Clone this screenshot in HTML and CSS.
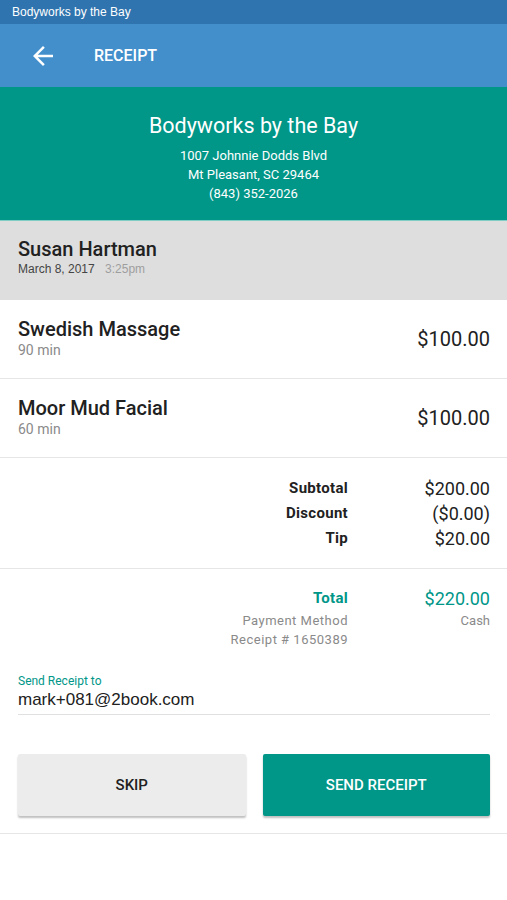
FILE: index.html
```html
<!DOCTYPE html>
<html lang="en">
<head>
    <meta charset="UTF-8">
    <meta name="viewport" content="width=device-width, initial-scale=1.0">
    <title>Receipt</title>
    <link rel="stylesheet" href="styles.css">
</head>
<body>
    <div class="status-bar">Bodyworks by the Bay</div>

    <header class="toolbar">
        <svg class="back-icon" width="30" height="30" viewBox="0 0 24 24">
            <path d="M20 11H7.83l5.59-5.59L12 4l-8 8 8 8 1.41-1.41L7.83 13H20v-2z" fill="#fff"/>
        </svg>
        <span class="toolbar-title">RECEIPT</span>
    </header>

    <section class="business">
        <div class="business-name">Bodyworks by the Bay</div>
        <div class="business-line">1007 Johnnie Dodds Blvd</div>
        <div class="business-line">Mt Pleasant, SC 29464</div>
        <div class="business-line">(843) 352-2026</div>
    </section>

    <section class="customer">
        <div class="customer-name">Susan Hartman</div>
        <div class="customer-date">March 8, 2017 <span class="customer-time">3:25pm</span></div>
    </section>

    <div class="item">
        <div class="item-info">
            <div class="item-name">Swedish Massage</div>
            <div class="item-length">90 min</div>
        </div>
        <div class="item-price">$100.00</div>
    </div>
    <div class="item">
        <div class="item-info">
            <div class="item-name">Moor Mud Facial</div>
            <div class="item-length">60 min</div>
        </div>
        <div class="item-price">$100.00</div>
    </div>

    <section class="summary">
        <div class="sum-row"><span class="sum-label">Subtotal</span><span class="sum-value">$200.00</span></div>
        <div class="sum-row"><span class="sum-label">Discount</span><span class="sum-value">($0.00)</span></div>
        <div class="sum-row"><span class="sum-label">Tip</span><span class="sum-value">$20.00</span></div>
    </section>

    <section class="totals">
        <div class="sum-row total"><span class="sum-label">Total</span><span class="sum-value">$220.00</span></div>
        <div class="sum-row meta"><span class="sum-label">Payment Method</span><span class="sum-value">Cash</span></div>
        <div class="sum-row meta"><span class="sum-label">Receipt # 1650389</span><span class="sum-value"></span></div>
    </section>

    <section class="send">
        <label class="send-label" for="email">Send Receipt to</label>
        <input id="email" class="send-input" type="text" value="mark+081@2book.com">
    </section>

    <div class="actions">
        <button class="btn btn-skip">SKIP</button>
        <button class="btn btn-send">SEND RECEIPT</button>
    </div>
</body>
</html>
```

FILE: styles.css
```css
body {
    margin: 0;
    font-family: Roboto, "Liberation Sans", sans-serif;
    color: #212121;
    background: #fff;
}

.status-bar {
    height: 24px;
    background: #2f74ae;
    color: #fff;
    font-family: "Liberation Sans", Arial, sans-serif;
    font-size: 12px;
    line-height: 25px;
    padding-left: 12px;
}

.toolbar {
    height: 63px;
    background: #428fcc;
    display: flex;
    align-items: center;
    color: #fff;
}
.back-icon { margin-left: 28px; }
.toolbar-title {
    margin-left: 36px;
    font-size: 16px;
    font-weight: 500;
}

.business {
    background: #009688;
    color: #fff;
    text-align: center;
    padding: 27px 0 17px;
    border-bottom: 1px solid #7fcdc4;
}
.business-name {
    font-size: 21.5px;
    line-height: 24px;
    margin-bottom: 8px;
}
.business-line {
    font-size: 13px;
    line-height: 19px;
}

.customer {
    background: #dedede;
    height: 79px;
    padding: 16px 18px 0;
    box-sizing: border-box;
}
.customer-name {
    font-size: 20px;
    font-weight: 500;
    line-height: 24px;
}
.customer-date {
    font-family: "Liberation Sans", Arial, sans-serif;
    font-size: 12px;
    color: #444;
    margin-top: 1px;
}
.customer-time {
    color: #9e9e9e;
    margin-left: 7px;
}

.item {
    display: flex;
    align-items: center;
    justify-content: space-between;
    height: 78px;
    padding: 0 17px 0 18px;
    border-bottom: 1px solid #e6e6e6;
}
.item-info { margin-top: -2px; }
.item-name {
    font-size: 20px;
    font-weight: 500;
    line-height: 24px;
}
.item-length {
    font-size: 14px;
    color: #8a8a8a;
    line-height: 18px;
}
.item-price { font-size: 20px; }

.summary {
    padding: 18px 17px 17px 0;
    border-bottom: 1px solid #e6e6e6;
}
.totals {
    padding: 17px 17px 0 0;
}
.sum-row {
    display: flex;
    justify-content: flex-end;
    align-items: center;
    height: 25px;
    font-size: 18px;
    line-height: 25px;
}
.sum-label {
    font-size: 15px;
    font-weight: 700;
    letter-spacing: 0.3px;
    text-align: right;
}
.sum-value {
    width: 142px;
    text-align: right;
}
.total { color: #009688; }
.meta {
    height: 19px;
    color: #8a8a8a;
    font-size: 13px;
    line-height: 19px;
}
.meta .sum-label {
    font-size: 13px;
    font-weight: 400;
    letter-spacing: 0.5px;
}

.send {
    padding: 25px 17px 0 18px;
}
.send-label {
    display: block;
    color: #009688;
    font-size: 12px;
    line-height: 14px;
}
.send-input {
    display: block;
    width: 100%;
    box-sizing: border-box;
    border: none;
    border-bottom: 1px solid #e0e0e0;
    padding: 2px 0 4px;
    font-family: "Liberation Sans", Arial, sans-serif;
    font-size: 17px;
    line-height: 20px;
    color: #212121;
    outline: none;
}

.actions {
    display: flex;
    gap: 17px;
    padding: 39px 17px 17px 18px;
    border-bottom: 1px solid #e6e6e6;
}
.btn {
    flex: 1;
    height: 62px;
    border: none;
    border-radius: 2px;
    font-family: Roboto, "Liberation Sans", sans-serif;
    font-size: 15px;
    font-weight: 500;
    box-shadow: 0 2px 2px rgba(0, 0, 0, 0.25);
}
.btn-skip {
    background: #ececec;
    color: #212121;
}
.btn-send {
    background: #009688;
    color: #fff;
}
```
